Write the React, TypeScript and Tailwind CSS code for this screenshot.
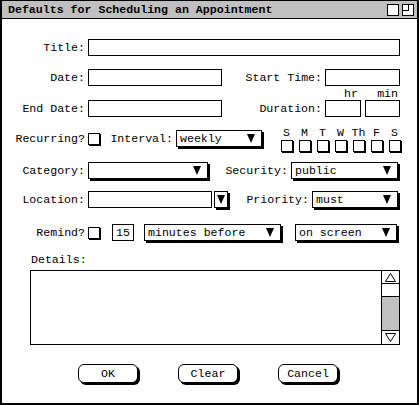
import React from "react";

const Tri = () => (
  <svg width="8" height="9" viewBox="0 0 8 9" className="shrink-0">
    <polygon points="0,0 8,0 4,9" fill="black" />
  </svg>
);

const Box = ({ className = "", children }: { className?: string; children?: React.ReactNode }) => (
  <div className={"h-[17px] border border-black bg-white shrink-0 " + className}>{children}</div>
);

const Drop = ({ className = "", text = "" }: { className?: string; text?: string }) => (
  <div
    className={
      "h-[17px] border border-black bg-white shadow-[2px_2px_0_#000] flex items-center justify-between pl-[3px] pr-[6px] shrink-0 " +
      className
    }
  >
    <span className="leading-[15px]">{text}</span>
    <Tri />
  </div>
);

const Check = ({ className = "" }: { className?: string }) => (
  <div className={"w-[12px] h-[12px] border border-black bg-white shadow-[1px_1px_0_#000] shrink-0 " + className} />
);

const Label = ({ className = "", children }: { className?: string; children: React.ReactNode }) => (
  <div className={"text-right whitespace-nowrap shrink-0 leading-[17px] " + className}>{children}</div>
);

const Btn = ({ children }: { children: React.ReactNode }) => (
  <div className="w-[60px] h-[19px] border border-black rounded-[6px] shadow-[2px_2px_0_#000] bg-white flex items-center justify-center leading-[17px]">
    {children}
  </div>
);

export default function App() {
  const days = ["S", "M", "T", "W", "Th", "F", "S"];
  return (
    <div className="w-[419px] h-[405px] bg-white text-black font-[family-name:'Liberation_Mono','Courier_New',monospace] text-[11.6px]">
      <div className="w-[419px] h-[405px] border-t border-x-2 border-b-2 border-black flex flex-col">
        {/* Title bar */}
        <div className="h-[18px] bg-[#c0c0c0] border-b border-black flex items-center justify-between pl-[6px] pr-[3px] shrink-0">
          <span className="font-bold leading-[17px]">Defaults for Scheduling an Appointment</span>
          <div className="flex items-center gap-[3px]">
            <div className="w-[12px] h-[12px] border border-black bg-white" />
            <div className="w-[12px] h-[12px] border border-black bg-white">
              <div className="w-[6px] h-[6px] border-r border-b border-black" />
            </div>
          </div>
        </div>

        {/* Title */}
        <div className="flex items-center h-[17px] mt-[20px]">
          <Label className="w-[83px]">Title:</Label>
          <Box className="ml-[3px] w-[312px]" />
        </div>

        {/* Date / Start Time */}
        <div className="flex items-center h-[17px] mt-[13px]">
          <Label className="w-[83px]">Date:</Label>
          <Box className="ml-[3px] w-[134px]" />
          <Label className="w-[100px]">Start Time:</Label>
          <Box className="ml-[3px] w-[75px]" />
        </div>

        {/* End Date / Duration */}
        <div className="flex items-start h-[17px] mt-[14px]">
          <Label className="w-[83px]">End Date:</Label>
          <Box className="ml-[3px] w-[134px]" />
          <Label className="w-[100px]">Duration:</Label>
          <div className="ml-[3px] -mt-[12px] flex flex-col items-end w-[36px] shrink-0">
            <div className="h-[12px] leading-[12px] pr-[3px]">hr</div>
            <Box className="w-[36px]" />
          </div>
          <div className="ml-[4px] -mt-[12px] flex flex-col items-end w-[35px] shrink-0">
            <div className="h-[12px] leading-[12px] pr-[2px]">min</div>
            <Box className="w-[35px]" />
          </div>
        </div>

        {/* Recurring / Interval / Days */}
        <div className="flex items-center h-[17px] mt-[13px]">
          <Label className="w-[83px]">Recurring?</Label>
          <Check className="ml-[3px]" />
          <Label className="w-[72px] ml-[1px]">Interval:</Label>
          <Drop className="ml-[3px] w-[86px]" text="weekly" />
          <div className="self-start -mt-[4px] ml-[18px] flex gap-[5px]">
            {days.map((d, i) => (
              <div key={i} className="w-[13px] flex flex-col items-center">
                <div className="h-[13px] leading-[13px] whitespace-nowrap">{d}</div>
                <Check className="mt-[1px]" />
              </div>
            ))}
          </div>
        </div>

        {/* Category / Security */}
        <div className="flex items-center h-[17px] mt-[15px]">
          <Label className="w-[83px]">Category:</Label>
          <Drop className="ml-[3px] w-[120px]" />
          <Label className="w-[80px]">Security:</Label>
          <Drop className="ml-[3px] w-[107px]" text="public" />
        </div>

        {/* Location / Priority */}
        <div className="flex items-center h-[17px] mt-[12px]">
          <Label className="w-[83px]">Location:</Label>
          <Box className="ml-[3px] w-[124px]" />
          <div className="ml-[2px] w-[14px] h-[17px] border border-black shadow-[2px_2px_0_#000] flex items-center justify-center shrink-0">
            <Tri />
          </div>
          <Label className="w-[81px]">Priority:</Label>
          <Drop className="ml-[3px] w-[86px]" text="must" />
        </div>

        {/* Remind */}
        <div className="flex items-center h-[17px] mt-[16px]">
          <Label className="w-[83px]">Remind?</Label>
          <Check className="ml-[3px]" />
          <Box className="ml-[12px] w-[22px] flex items-center justify-center leading-[15px]">15</Box>
          <Drop className="ml-[10px] w-[137px]" text="minutes before" />
          <Drop className="ml-[14px] w-[102px]" text="on screen" />
        </div>

        {/* Details */}
        <div className="h-[12px] leading-[12px] mt-[13px] pl-[29px]">Details:</div>
        <div className="ml-[28px] mt-[4px] w-[370px] h-[75px] border border-black flex justify-end">
          <div className="w-[18px] h-full border-l border-black flex flex-col">
            <div className="h-[13px] border-b border-black flex items-center justify-center">
              <svg width="11" height="9" viewBox="0 0 11 9">
                <polygon points="5.5,0.5 10.5,8.5 0.5,8.5" fill="none" stroke="black" strokeWidth="1" />
              </svg>
            </div>
            <div className="h-[13px] bg-white border-b border-black" />
            <div className="flex-1 bg-[#c0c0c0]" />
            <div className="h-[14px] border-t border-black flex items-center justify-center">
              <svg width="11" height="9" viewBox="0 0 11 9">
                <polygon points="0.5,0.5 10.5,0.5 5.5,8.5" fill="none" stroke="black" strokeWidth="1" />
              </svg>
            </div>
          </div>
        </div>

        {/* Buttons */}
        <div className="flex pl-[76px] gap-[40px] mt-[19px]">
          <Btn>OK</Btn>
          <Btn>Clear</Btn>
          <Btn>Cancel</Btn>
        </div>
      </div>
    </div>
  );
}
